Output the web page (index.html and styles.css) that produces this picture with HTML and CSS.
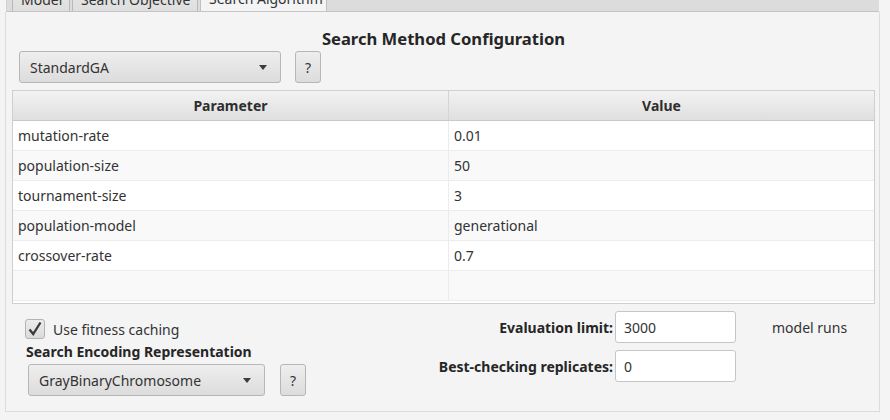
FILE: index.html
```html
<!DOCTYPE html>
<html>
<head>
<meta charset="utf-8">
<link rel="stylesheet" href="styles.css">
</head>
<body>
<div class="tabbar">
  <div class="tab">Model</div>
  <div class="tab">Search Objective</div>
  <div class="tab tab-active">Search Algorithm</div>
</div>
<div class="panel">
  <div class="title">Search Method Configuration</div>
  <div class="method-row">
    <div class="combo combo-method"><span>StandardGA</span><i class="arrow"></i></div>
    <div class="qbtn">?</div>
  </div>
  <div class="table">
    <div class="thead">
      <div class="th">Parameter</div>
      <div class="th">Value</div>
    </div>
    <div class="tr"><div class="td">mutation-rate</div><div class="td">0.01</div></div>
    <div class="tr odd"><div class="td">population-size</div><div class="td">50</div></div>
    <div class="tr"><div class="td">tournament-size</div><div class="td">3</div></div>
    <div class="tr odd"><div class="td">population-model</div><div class="td">generational</div></div>
    <div class="tr"><div class="td">crossover-rate</div><div class="td">0.7</div></div>
    <div class="tr odd"><div class="td"></div><div class="td"></div></div>
  </div>
  <div class="bottom">
    <div class="left">
      <label class="check-row">
        <span class="checkbox"><svg width="20" height="20" viewBox="0 0 20 20"><path d="M4.5 10.5 L8.2 15 L15.5 3.5" fill="none" stroke="#3a3a3a" stroke-width="2.3" stroke-linejoin="miter"/></svg></span>
        <span>Use fitness caching</span>
      </label>
      <div class="enc-title">Search Encoding Representation</div>
      <div class="enc-row">
        <div class="combo combo-enc"><span>GrayBinaryChromosome</span><i class="arrow"></i></div>
        <div class="qbtn">?</div>
      </div>
    </div>
    <div class="fields">
      <div class="flabel">Evaluation limit:</div>
      <div class="input">3000</div>
      <div class="unit">model runs</div>
      <div class="flabel">Best-checking replicates:</div>
      <div class="input">0</div>
      <div class="unit"></div>
    </div>
  </div>
</div>
</body>
</html>
```
FILE: styles.css
```css
html, body {
  margin: 0;
  padding: 0;
}
body {
  width: 890px;
  height: 420px;
  overflow: hidden;
  background: #f4f4f4;
  font-family: "Noto Sans", "Open Sans", sans-serif;
  font-size: 14px;
  color: #333333;
}
.tabbar {
  margin-left: 6px;
  width: 873px;
  height: 12px;
  overflow: hidden;
  display: flex;
  align-items: flex-end;
  gap: 2px;
  padding-left: 5px;
  box-sizing: border-box;
  background: #dcdcdc;
  border-bottom: 1px solid #c4c4c4;
  border-left: 1px solid #d2d2d2;
}
.tab {
  height: 28px;
  box-sizing: border-box;
  padding: 0 8px;
  line-height: 29px;
  font-size: 14px;
  white-space: nowrap;
  color: #333;
  background: linear-gradient(#e8e8e8, #dedede);
  border: 1px solid #b8b8b8;
  border-bottom: none;
  flex: none;
  margin-bottom: -1px;
}
.tab:nth-child(1) { width: 58px; }
.tab:nth-child(2) { width: 126px; }
.tab-active {
  width: 127px;
  background: #f4f4f4;
  border-color: #c0c0c0;
  height: 29px;
  line-height: 30px;
  position: relative;
  z-index: 1;
}
.panel {
  margin-left: 5px;
  width: 875px;
  height: 400px;
  box-sizing: border-box;
  border: 1px solid #dcdcdc;
  border-top: none;
  padding: 15px 4px 0 6px;
  display: flex;
  flex-direction: column;
}
.title {
  text-align: center;
  font-weight: bold;
  font-size: 16.6px;
  line-height: 24px;
  color: #262626;
}
.method-row {
  display: flex;
  align-items: center;
  gap: 14px;
  padding-left: 7px;
  height: 32px;
}
.combo {
  height: 32px;
  box-sizing: border-box;
  border: 1px solid #b6b6b6;
  border-radius: 3px;
  background: linear-gradient(#eeeeee, #dcdcdc);
  display: flex;
  align-items: center;
  justify-content: space-between;
  padding: 0 10px 0 10px;
  font-size: 14px;
}
.combo-method { width: 262px; }
.combo-enc { width: 237px; }
.arrow {
  width: 0;
  height: 0;
  border-left: 4.5px solid transparent;
  border-right: 4.5px solid transparent;
  border-top: 5px solid #3c3c3c;
  margin-right: 3px;
}
.qbtn {
  width: 26px;
  height: 32px;
  box-sizing: border-box;
  border: 1px solid #b6b6b6;
  border-radius: 3px;
  background: linear-gradient(#eeeeee, #dcdcdc);
  display: flex;
  align-items: center;
  justify-content: center;
  font-size: 14px;
}
.table {
  margin-top: 7px;
  height: 214px;
  box-sizing: border-box;
  border: 1px solid #cfcfcf;
  background: #ffffff;
  width: 863px;
}
.thead {
  display: grid;
  grid-template-columns: 436px 1fr;
  height: 30px;
  background: linear-gradient(#f2f2f2, #dfdfdf);
  border-bottom: 1px solid #c9c9c9;
  box-sizing: border-box;
}
.th {
  display: flex;
  align-items: center;
  justify-content: center;
  font-weight: bold;
  font-size: 14px;
  color: #2e2e2e;
}
.th:first-child { border-right: 1px solid #d4d4d4; }
.tr {
  display: grid;
  grid-template-columns: 436px 1fr;
  height: 30px;
  box-sizing: border-box;
  border-bottom: 1px solid #ececec;
  background: #ffffff;
}
.tr.odd { background: #f9f9f9; }
.td {
  display: flex;
  align-items: center;
  padding-left: 5px;
  font-size: 14px;
}
.td:first-child { border-right: 1px solid #ececec; }
.bottom {
  display: flex;
}
.left {
  width: 418px;
  box-sizing: border-box;
  padding-left: 13px;
  padding-top: 15px;
  display: flex;
  flex-direction: column;
}
.check-row {
  display: flex;
  align-items: center;
  gap: 8px;
  height: 20px;
  font-size: 14px;
}
.checkbox {
  width: 20px;
  height: 20px;
  box-sizing: border-box;
  border: 1px solid #b3b3b3;
  border-radius: 3px;
  background: linear-gradient(#ececec, #dbdbdb);
  display: block;
}
.checkbox svg { display: block; margin: -1px; }
.enc-title {
  margin-top: 4px;
  margin-left: 1px;
  font-weight: bold;
  font-size: 14px;
  line-height: 18px;
  color: #262626;
}
.enc-row {
  display: flex;
  gap: 15px;
  margin-top: 3px;
  margin-left: 3px;
}
.fields {
  display: grid;
  grid-template-columns: 185px 121px auto;
  grid-auto-rows: 32px;
  row-gap: 7px;
  column-gap: 0;
  padding-top: 7px;
  align-items: center;
}
.flabel {
  text-align: right;
  font-weight: bold;
  font-size: 14px;
  color: #262626;
  padding-right: 2px;
  white-space: nowrap;
}
.input {
  height: 32px;
  box-sizing: border-box;
  border: 1px solid #c6c6c6;
  border-radius: 3px;
  background: #ffffff;
  display: flex;
  align-items: center;
  padding-left: 8px;
  font-size: 14px;
}
.unit {
  padding-left: 36px;
  font-size: 14px;
}
```
